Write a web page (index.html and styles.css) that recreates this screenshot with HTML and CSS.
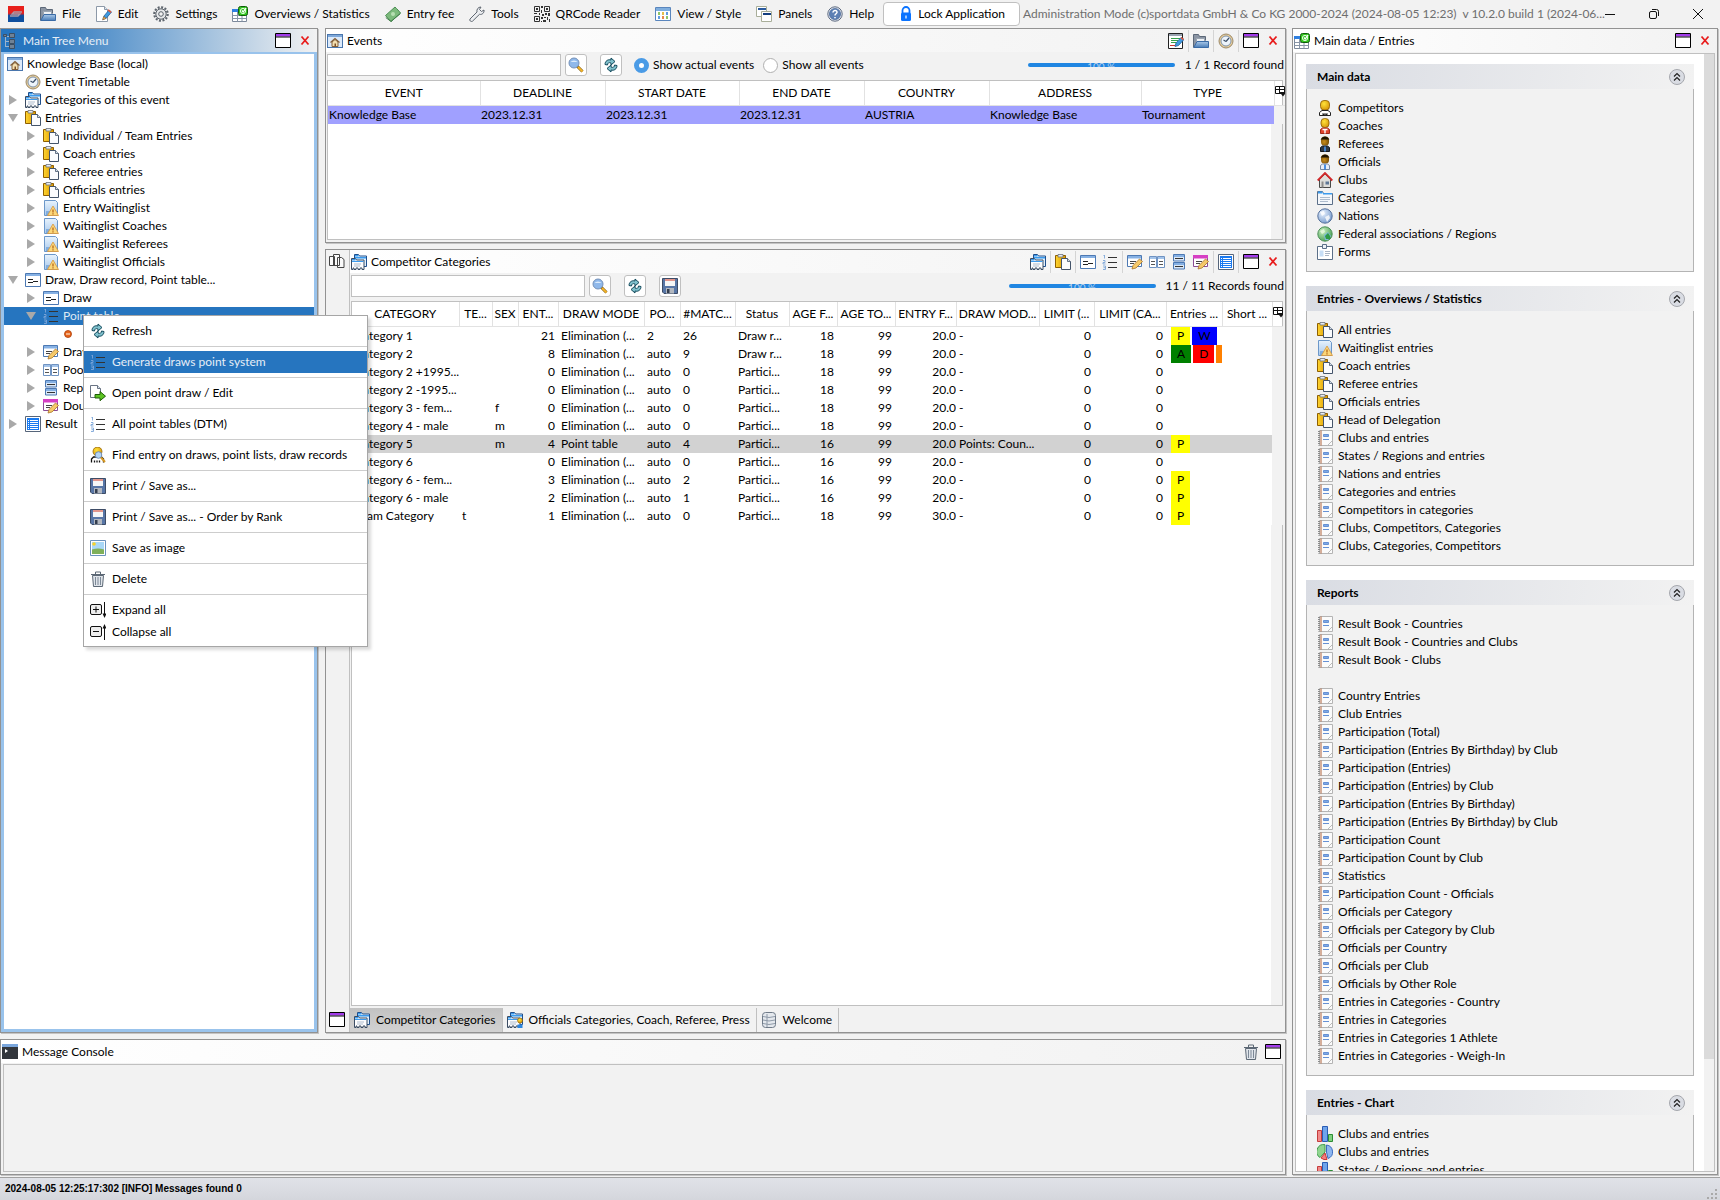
FILE: index.html
```html
<!DOCTYPE html>
<html lang="en">
<head>
  <meta charset="UTF-8" />
  <meta name="viewport" content="width=device-width, initial-scale=1" />
  <title>Sportdata | Administration Mode</title>
  <link rel="stylesheet" href="styles.css">
</head>
<body>
  <!-- Icon sprite -->
  <svg class="sprite" width="0" height="0" aria-hidden="true">
    <defs>
      <linearGradient id="g-blue" x1="0" y1="0" x2="0" y2="1"><stop offset="0" stop-color="#e8f3fd"/><stop offset="1" stop-color="#a9c9ec"/></linearGradient>
      <linearGradient id="g-folder" x1="0" y1="0" x2="0" y2="1"><stop offset="0" stop-color="#a9c8e8"/><stop offset="1" stop-color="#4a7db8"/></linearGradient>
      <linearGradient id="g-gold" x1="0" y1="0" x2="1" y2="0"><stop offset="0" stop-color="#ffd530"/><stop offset="1" stop-color="#d99400"/></linearGradient>
      <linearGradient id="g-logo" x1="0" y1="0" x2="0" y2="1"><stop offset="0.45" stop-color="#e8201c"/><stop offset="0.6" stop-color="#0f4f9e"/></linearGradient>
      <radialGradient id="g-globe" cx="0.35" cy="0.3" r="0.8"><stop offset="0" stop-color="#e8f2ff"/><stop offset="1" stop-color="#6f94c8"/></radialGradient>
      <radialGradient id="g-green" cx="0.35" cy="0.3" r="0.8"><stop offset="0" stop-color="#c9efc0"/><stop offset="1" stop-color="#3f9a4c"/></radialGradient>
      <radialGradient id="g-head" cx="0.4" cy="0.35" r="0.8"><stop offset="0" stop-color="#ffe23a"/><stop offset="1" stop-color="#d08a00"/></radialGradient>
      <radialGradient id="g-dark" cx="0.4" cy="0.6" r="0.8"><stop offset="0" stop-color="#c98d1c"/><stop offset="1" stop-color="#5a3a00"/></radialGradient>
    </defs>
    <symbol id="i-logo" viewBox="0 0 16 16"><rect width="16" height="16" fill="url(#g-logo)"/><path d="M14 6H6L4 8h8l-2 2H2" fill="none" stroke="#a89aa8" stroke-width="1.300"/></symbol>
    <symbol id="i-folder" viewBox="0 0 16 16"><path d="M.5 14.500V1.500h5l1 2h6v4" fill="#8b95a4" stroke="#5c6878"/><path d="M3.500 5.500h8v3h-8z" fill="#eef1f5" stroke="#9aa4b0"/><path d="M4 8.500h11.500v6H.8z" fill="url(#g-folder)" stroke="#3a6ba6"/></symbol>
    <symbol id="i-edit" viewBox="0 0 16 16"><path d="M.5 .5h8l3 3v12H.5z" fill="#fff" stroke="#8d99a8"/><path d="M8.500 .5v3h3" fill="#dfe7f0" stroke="#8d99a8"/><path d="M7 13.500l1-3.500 5-6 2.500 2-5 6z" fill="#3f9be0" stroke="#235d9a" stroke-width=".8"/><path d="M6.500 14l1.200-3.600L10.200 12.400z" fill="#f0b050" stroke="#7d4f26" stroke-width=".5"/><path d="M12.500 3.200L15.500 5.700l-1 1.200-3-2.400z" fill="#e2573a"/></symbol>
    <symbol id="i-gear" viewBox="0 0 16 16"><circle cx="8" cy="8" r="6.700" fill="none" stroke="#5f666e" stroke-width="2.200" stroke-dasharray="2 1.500"/><circle cx="8" cy="8" r="5.200" fill="#e6e8ea" stroke="#5a6169"/><circle cx="8" cy="8" r="2.300" fill="#f2f2f2" stroke="#5a6169"/></symbol>
    <symbol id="i-overview" viewBox="0 0 16 16"><path d="M.5 3.500h14v12H.5z" fill="#fff" stroke="#7c899b"/><path d="M0 3h10v3H0z" fill="#2f7fe0"/><path d="M.5 9.500h14M.5 12.500h14M5.500 6v9.500M10 8v7.500" stroke="#8996a8"/><rect x="6.500" y=".5" width="9" height="9" rx="2" fill="#35c422" stroke="#0e5c08"/><circle cx="11" cy="5" r="2.600" fill="none" stroke="#e9ffe4"/><path d="M10 4.500l1.200 1.500L14 2" fill="none" stroke="#fff" stroke-width="1.300"/></symbol>
    <symbol id="i-money" viewBox="0 0 16 16"><path d="M.5 9.500L10 1l1.500 1.500L13 4l2.500 3L6 15.500z" fill="#7cba7c" stroke="#4d8f55"/><path d="M.8 11.500l5.200 4 9.500-8" fill="none" stroke="#3f7d48"/><circle cx="8" cy="8" r="2" fill="#b6deb2"/></symbol>
    <symbol id="i-wrench" viewBox="0 0 16 16"><path d="M1 13l7-7c-.6-2.500 1-5 4-5l-1.500 2.500 2 2L15 4c.4 3-2 5-4.500 4.300L3.500 15.200C2 16.200 0 14.500 1 13z" fill="#eceef1" stroke="#5e6670"/></symbol>
    <symbol id="i-qr" viewBox="0 0 16 16"><path d="M.5 .5h5v5h-5zM10.500 .5h5v5h-5zM.5 10.500h5v5h-5z" fill="none" stroke="#333"/><path d="M2 2h2v2H2zM12 2h2v2h-2zM2 12h2v2H2zM7 0h2v2H7zM7 4h1v3H7zM0 7h3v1H0zM5 7h1v2H5zM8 8h2v2H8zM11 7h2v2h-2zM14 7h2v3h-2zM7 11h2v2H7zM10 11h2v1h-2zM13 11h1v3h-1zM9 14h3v2H9zM15 13h1v3h-1zM7 15h1v1H7z" fill="#333"/></symbol>
    <symbol id="i-view" viewBox="0 0 16 16"><path d="M.5 1.500h15v13H.5z" fill="#fff" stroke="#5a86bd"/><path d="M1 2h14v3H1z" fill="#7faede"/><path d="M3 6h2v3H3zM11 10h2v3h-2z" fill="#8fc66a"/><path d="M7 6h2v3H7z" fill="#e4c04a"/><path d="M11 6h2v3h-2zM3 10h2v3H3z" fill="#5f9be0"/><path d="M7 10h2v3H7z" fill="#e88a4a"/></symbol>
    <symbol id="i-panels" viewBox="0 0 16 16"><path d="M.5 .5h10v10H.5z" fill="#fff" stroke="#a9ae9a"/><path d="M2 2h8v2H2z" fill="#2a5a9e"/><path d="M5.500 5.500h10v10h-10z" fill="#fff" stroke="#a9ae9a"/><path d="M7 7h8v2H7z" fill="#143f80"/></symbol>
    <symbol id="i-help" viewBox="0 0 16 16"><circle cx="8" cy="8" r="7.200" fill="#e9edf4" stroke="#5d6a80"/><circle cx="8" cy="8" r="5.600" fill="#5d80b4" stroke="#3a5a8c" stroke-width=".6"/><path d="M6 6.500C6 3.800 10.300 4 10 6.500 9.800 7.800 8 7.800 8 9.500M8 11v1.300" fill="none" stroke="#fff" stroke-width="1.500"/></symbol>
    <symbol id="i-lock" viewBox="0 0 16 16"><path d="M4.500 7V4.500a3.500 3.500 0 0 1 7 0V7" fill="none" stroke="#0a73ff" stroke-width="1.800"/><rect x="3" y="6.500" width="10" height="8.500" rx="1.500" fill="#0a73ff"/><path d="M8 9.500v3" stroke="#fff" stroke-width="1.200"/></symbol>
    <symbol id="i-tree" viewBox="0 0 16 16"><path d="M2.500 3v11M3 8.500h4M3 13.500h4M4 3.500h3" stroke="#9db4cc" fill="none"/><path d="M.5 1.500h3v2h-3zM6.500 .5h5v4h-5zM6.500 6.500h5v4h-5zM6.500 11.500h5v4h-5z" fill="#6f8296" stroke="#3c4f64"/></symbol>
    <symbol id="i-home" viewBox="0 0 16 16"><rect x=".5" y="1.500" width="15" height="13" fill="#dceafa" stroke="#4a76ad"/><rect x="1" y="2" width="14" height="2" fill="#7fa9da"/><path d="M5 9v4.500h6V9L8 6.500z" fill="#f3dfb0" stroke="#84603a"/><path d="M3.500 9.500L8 5.500l4.500 4" fill="none" stroke="#84603a" stroke-width="1.200"/><path d="M7.500 10.500h1.500v3H7.500z" fill="#7d4f26"/></symbol>
    <symbol id="i-clock" viewBox="0 0 16 16"><circle cx="8" cy="8" r="7" fill="#e6cc98" stroke="#9c8a6b"/><circle cx="8" cy="8" r="5" fill="#edf4fb" stroke="#7f94ae"/><path d="M8 8.500l3-3.500M8 8.500L5.500 7" stroke="#3d5068" fill="none" stroke-width="1.200"/></symbol>
    <symbol id="i-cats" viewBox="0 0 16 16"><path d="M3.500 5V.5h4l1 1.500h7v10.500h-3" fill="#e3f0fc" stroke="#1f4f8c"/><path d="M4 1h3.500v1.500H4zM4 3h11v1.500H4z" fill="#3b9bee"/><path d="M.5 15.500V4.500h4l1 1.500h7.500v9.500h-2v-1.500H9v1.500H7v-1.500H5v1.500H3v-1.500H2v1.500z" fill="#fdfdfe" stroke="#3b4c63"/><path d="M1 5h3.500v1.500H1zM1 7h11.500v1H1z" fill="#3b9bee"/><path d="M3 10h7M3 12h6" stroke="#aebccd"/></symbol>
    <symbol id="i-offcats" viewBox="0 0 16 16"><use href="#i-cats"/><circle cx="13" cy="8.500" r="2.500" fill="url(#g-head)" stroke="#8a5a00" stroke-width=".6"/><path d="M10.500 16v-3.500h5V16z" fill="#2c86e0"/></symbol>
    <symbol id="i-paste" viewBox="0 0 16 16"><path d="M.5 1.500h10v12H.5z" fill="url(#g-gold)" stroke="#8f5f00"/><path d="M3 .5h5v2.500H3z" fill="#e8ebf0" stroke="#6b727c" stroke-width=".8"/><path d="M6.500 4.500h6l3 3v8h-9z" fill="#fbfcfe" stroke="#44546a"/><path d="M12.500 4.500v3h3" fill="#d5dfeb" stroke="#44546a" stroke-width=".8"/></symbol>
    <symbol id="i-warn" viewBox="0 0 16 16"><path d="M1.500 .5h11l2 2v13h-13z" fill="url(#g-blue)" stroke="#6b97c9"/><path d="M3 12h4M3 14h3" stroke="#4c8ad0"/><path d="M10 6l5.500 9.500h-11z" fill="#fbd77a" stroke="#d8963a" stroke-width=".8"/><path d="M10 9.500v3M10 13.300v1.200" stroke="#b25f12" stroke-width="1.200"/></symbol>
    <symbol id="i-draw" viewBox="0 0 16 16"><path d="M.5 1.500h15v13H.5z" fill="#fff" stroke="#4d79b3"/><path d="M1 2h14v2H1z" fill="#86b1e4"/><path d="M3 7.500h5M3 10.500h5M8 9.500h5" stroke="#222"/></symbol>
    <symbol id="i-list" viewBox="0 0 16 16"><path d="M6 3.500h9M6 8.500h9M6 13.500h9" stroke="#333"/><path d="M2.500 1v3.500M1.500 1.500h1M1 6.500h2v2H1V10h2.500M1 12h2.500v3.500H1M1.500 13.700h2" stroke="#7da6d8" fill="none" stroke-width=".9"/></symbol>
    <symbol id="i-dot" viewBox="0 0 16 16"><circle cx="8" cy="8" r="3.500" fill="#e8651a" stroke="#a83c0a" stroke-width=".8"/><path d="M6 8h4" stroke="#fbe0c8" stroke-width="1.200"/></symbol>
    <symbol id="i-drawrec" viewBox="0 0 16 16"><path d="M.5 1.500h14v11H.5z" fill="#fff" stroke="#4d79b3"/><path d="M1 2h13v2.500H1z" fill="#86b1e4"/><path d="M3 7.500h6M3 9.500h4" stroke="#444"/><path d="M5 15l1-3.500L12.500 5l3 2.500L9 14z" fill="#f5c96a" stroke="#a8752a" stroke-width=".8"/></symbol>
    <symbol id="i-double" viewBox="0 0 16 16"><path d="M.5 1.500h14v11H.5z" fill="#fff" stroke="#8a4d95"/><path d="M0 1h15v3.500H0z" fill="#d63fc4"/><path d="M3 7.500h6M3 9.500h4" stroke="#444"/><path d="M5 15l1-3.500L12.500 5l3 2.500L9 14z" fill="#f5c96a" stroke="#a8752a" stroke-width=".8"/></symbol>
    <symbol id="i-pool" viewBox="0 0 16 16"><path d="M.5 2.500h7v11h-7zM8.500 2.500h7v11h-7z" fill="#fff" stroke="#6f93c2"/><path d="M1 3h6v2H1zM9 3h6v2H9z" fill="#a4c4ea"/><path d="M2 7.500h4M2 10.500h4M10 7.500h4M10 10.500h4" stroke="#555"/></symbol>
    <symbol id="i-rep" viewBox="0 0 16 16"><path d="M2.500 .5h11v6.500h-11zM2.500 8.500h11v6.500h-11z" fill="#dbe8f7" stroke="#4d79b3"/><path d="M3 1h10v2H3zM3 9h10v2H3z" fill="#86b1e4"/><path d="M4 4.500h8M4 12.500h8" stroke="#333"/></symbol>
    <symbol id="i-result" viewBox="0 0 16 16"><path d="M.5 .5h15v15H.5z" fill="#fff" stroke="#56657a"/><path d="M2 2h12v12H2z" fill="#1a7af0"/><path d="M3 4.500h1M3 6.500h1M3 8.500h1M3 10.500h1M3 12.500h1M5 4.500h8M5 6.500h8M5 8.500h8M5 10.500h8M5 12.500h8" stroke="#fff"/></symbol>
    <symbol id="i-search" viewBox="0 0 16 16"><path d="M9 9l5.500 5.500" stroke="#7d5a16" stroke-width="3"/><path d="M10 10l4.500 4.500" stroke="#f5b62a" stroke-width="1.800"/><circle cx="6" cy="6" r="5" fill="#8fb8ea" stroke="#7591b8"/><path d="M2.500 5a4 3 0 0 1 7 0z" fill="#dcebfb"/></symbol>
    <symbol id="i-refresh" viewBox="0 0 16 16"><path d="M2 7.500C2 4 5 2 8 3V1l4 3.500L8 8V6C6 5 4.500 6 4.500 8z" fill="#7fc0cc" stroke="#134a5c"/><path d="M14 8.500c0 3.500-3 5.500-6 4.500v2L4 11.500 8 8v2c2 1 3.500 0 3.500-2z" fill="#7fc0cc" stroke="#134a5c"/></symbol>
    <symbol id="i-floppy" viewBox="0 0 16 16"><path d="M.5 .5h15v15H2l-1.500-1.500z" fill="#5876a6" stroke="#3d4c66"/><path d="M3 1h10v7H3z" fill="#f6f6f6"/><path d="M3 1h10v2H3z" fill="#e2968c"/><path d="M4 10h8v5.500H4z" fill="#b3b8c0"/><path d="M5 11h2.500v4H5z" fill="#333d4e"/></symbol>
    <symbol id="i-open" viewBox="0 0 16 16"><path d="M.5 .5h7l3 3v9H.5z" fill="#fff" stroke="#6a7484"/><path d="M7.500 .5v3h3" fill="#dfe7f0" stroke="#6a7484"/><path d="M5 9.500h5V6.500l5.500 4.700-5.500 4.500V13H5z" fill="#5cc422" stroke="#1f5c08"/></symbol>
    <symbol id="i-find" viewBox="0 0 16 16"><ellipse cx="7.500" cy="4.500" rx="4.500" ry="4.500" fill="url(#g-head)" stroke="#8a5a00" stroke-width=".7"/><path d="M1.500 15.500V12l2-2h8l2 2v3.500M4.500 15.500v-2M7 15.500v-2M9.500 15.500v-2" fill="#fff" stroke="#111" stroke-width="1.300"/><circle cx="8.500" cy="8" r="3.300" fill="#b4d4f4" stroke="#6f8cb4"/><path d="M11 10.500l4 4.500" stroke="#d89a24" stroke-width="2"/></symbol>
    <symbol id="i-image" viewBox="0 0 16 16"><path d="M.5 .5h15v15H.5z" fill="#fff" stroke="#6b93bd"/><path d="M2 2h12v8H2z" fill="#a9d8f7"/><path d="M2 9.500q6-2 12 0V14H2z" fill="#7fb05a"/><circle cx="4" cy="4" r="1.800" fill="#f6d22c"/></symbol>
    <symbol id="i-trash" viewBox="0 0 16 16"><path d="M2.500 4.500h11l-1 11h-9z" fill="#dfe4ea" stroke="#5c6875"/><path d="M1 3.500h14M5.500 3V1h5v2" fill="none" stroke="#5c6875"/><path d="M5.500 6v8M8 6v8M10.500 6v8" stroke="#7c8896"/></symbol>
    <symbol id="i-expand" viewBox="0 0 16 16"><rect x=".5" y="2.500" width="11" height="10" rx="1.500" fill="#eee" stroke="#111"/><path d="M3 7.500h6M6 4.500v6" stroke="#111"/><path d="M14.500 0v13" stroke="#111"/><path d="M12.500 11.500h4L14.500 16z" fill="#111"/></symbol>
    <symbol id="i-collapse" viewBox="0 0 16 16"><rect x=".5" y="2.500" width="11" height="10" rx="1.500" fill="#eee" stroke="#111"/><path d="M3 7.500h6" stroke="#111"/><path d="M14.500 16V3" stroke="#111"/><path d="M12.500 4.500h4L14.500 0z" fill="#111"/></symbol>
    <symbol id="i-formedit" viewBox="0 0 16 16"><path d="M.5 .5h14v15H.5z" fill="#fff" stroke="#222"/><path d="M1 2h13" stroke="#9aa4b0" stroke-width="2"/><path d="M3 5.500h9M3 7.500h7M3 9.500h5" stroke="#35a04a"/><path d="M2 12.500h5" stroke="#c33"/><path d="M7 13.500l1-3.500 5-5.500L16 6.500l-5.500 6z" fill="#3f9be0" stroke="#235d9a" stroke-width=".8"/><path d="M13.500 4L16 6l-1 1.200-2.500-2z" fill="#e2573a"/></symbol>
    <symbol id="i-pages" viewBox="0 0 16 16"><path d="M.5 3.500h5v9h-5zM4.500 1.500h6v11h-6zM8.500 4.500h4l2.500 2v8H8.500z" fill="#fafafa" stroke="#444"/></symbol>
    <symbol id="i-db" viewBox="0 0 16 16"><rect x="1.500" y=".5" width="13" height="15" rx="3" fill="#e4e8ed" stroke="#6f7a88"/><path d="M2 4.500q6 2 12 0M2 8q6 2 12 0M2 11.500q6 2 12 0M6 2v13" fill="none" stroke="#8f9aa8"/></symbol>
    <symbol id="i-console" viewBox="0 0 16 16"><path d="M0 0h16v15H0z" fill="#32363c"/><path d="M0 0h16v3H0z" fill="#7aa6dc"/><path d="M3 5l3 2-3 2z" fill="#fff"/></symbol>
    <symbol id="i-person" viewBox="0 0 16 16"><rect x="3.500" y=".5" width="9" height="9.500" rx="3.500" fill="url(#g-head)" stroke="#8a5a00" stroke-width=".8"/><path d="M2.500 15.500v-3l2.500-2h6l2.500 2v3z" fill="#fff" stroke="#222"/><path d="M5 13.500h6l-1 2-2-1-2 1z" fill="#222"/></symbol>
    <symbol id="i-coach" viewBox="0 0 16 16"><rect x="4" y=".5" width="8" height="9" rx="3.500" fill="url(#g-head)" stroke="#8a5a00" stroke-width=".8"/><path d="M3.500 15.500v-4l2-1.500h5l2 1.500v4z" fill="#e0442c" stroke="#a02818"/><path d="M5.500 11.500h5M8 11v4.500" stroke="#fff" stroke-width="1.400"/></symbol>
    <symbol id="i-referee" viewBox="0 0 16 16"><rect x="4" y=".5" width="8" height="9" rx="3.500" fill="url(#g-dark)"/><path d="M3.500 3.500q4.500-6 9 0z" fill="#1c1200"/><path d="M3.500 15.500v-4l2-1.500h5l2 1.500v4z" fill="#2d3846" stroke="#11161d"/><path d="M8 10.500v5" stroke="#4b93e8" stroke-width="1.600"/></symbol>
    <symbol id="i-official" viewBox="0 0 16 16"><rect x="4" y=".5" width="8" height="9" rx="3.500" fill="url(#g-dark)"/><path d="M3.500 3.500q4.500-6 9 0z" fill="#1c1200"/><path d="M3.500 15.500v-4l2-1.500h5l2 1.500v4z" fill="#e8eef6" stroke="#7688a0"/><path d="M8 10.500v5" stroke="#2476dc" stroke-width="1.600"/></symbol>
    <symbol id="i-club" viewBox="0 0 16 16"><path d="M2.500 7.500v8h11v-8L8 2z" fill="#dededa" stroke="#4a4a48"/><path d="M.7 8.500L8 1l7.300 7.500" fill="none" stroke="#d2282a" stroke-width="1.800"/><path d="M4.500 9.500h2v6h-2z" fill="#8c8c8a"/><path d="M8.500 9.500h3.500v3H8.500z" fill="#5f7896"/></symbol>
    <symbol id="i-category" viewBox="0 0 16 16"><path d="M.5 14.500v-13h5l1 2h9v11z" fill="#f4f7fb" stroke="#5b6f88"/><path d="M1 1.500h4.500v2H1zM6 3h9v1.500H6z" fill="#3b9bee"/><path d="M3 7.500h10M3 9.500h10M3 11.500h8" stroke="#aebccd"/></symbol>
    <symbol id="i-globe" viewBox="0 0 16 16"><circle cx="8" cy="8" r="7.200" fill="url(#g-globe)" stroke="#56719c"/><path d="M3 4l4-1 1 3-3 2zM8 9l4-2 1 3-3 4z" fill="#fff" opacity=".8"/></symbol>
    <symbol id="i-region" viewBox="0 0 16 16"><circle cx="8" cy="8" r="7.200" fill="url(#g-green)" stroke="#4c8f58"/><path d="M3 5l4-2 1 3-3 2z" fill="#e0f6d8"/><path d="M7 9l4-3 3 4-3 4H8z" fill="#7cb8d8"/><path d="M8 10l3-3 2 3v3H9z" fill="#2c9a44"/></symbol>
    <symbol id="i-form" viewBox="0 0 16 16"><path d="M.5 2.500h15v13H.5z" fill="#fff" stroke="#5b6f88"/><path d="M5.500 .5h4v4h-4z" fill="#eef2f7" stroke="#5b6f88"/><path d="M2.500 6.500h4v6h-4z" fill="#c7def6"/><path d="M8 7.500h5M8 9.500h5M8 11.500h4" stroke="#aab6c6"/></symbol>
    <symbol id="i-book" viewBox="0 0 16 16"><path d="M2.500 .5h13v15h-13z" fill="#fbfbfb" stroke="#b4b4b4"/><path d="M4 .5v15" stroke="#b0623a"/><path d="M2 1v14.500" stroke="#8a8a8a" stroke-dasharray="1 1" stroke-width="2"/><path d="M6.500 4.500h5v2h-5z" fill="#7fa9e4" stroke="#6690d4"/><path d="M6 9.500h6" stroke="#6690d4"/><path d="M10.500 15.500l5-5" stroke="#bbb"/></symbol>
    <symbol id="i-bars" viewBox="0 0 16 16"><path d="M.5 4.500h4v11h-4z" fill="#f08a8a" stroke="#c43c3c"/><path d="M5.500 .5h5v15h-5z" fill="#6fa4ec" stroke="#2a5cb4"/><path d="M11.500 8.500h4v7h-4z" fill="#7fd07f" stroke="#2c8c34"/></symbol>
    <symbol id="i-pie" viewBox="0 0 16 16"><path d="M8 8L3 13.500A7 7 0 0 1 8 .7z" fill="#8fd48f" stroke="#3f9a4c"/><path d="M9.500 1a7 7 0 0 1 1.500 13.500L9.500 8z" fill="#8db6f0" stroke="#3a6cc0"/><path d="M8 9l2 6.500q-3 .8-6-1.500z" fill="#f08080" stroke="#c33"/></symbol>
    <symbol id="i-max" viewBox="0 0 16 16"><path d="M.5 .5h15v14H.5z" fill="#fff" stroke="#000"/><path d="M1 1h14v2.500H1z" fill="#a23bea"/><path d="M1 4h14" stroke="#000"/></symbol>
    <symbol id="i-close" viewBox="0 0 16 16"><path d="M4.500 3.500l7 8M11.500 3.500l-7 8" stroke="#e81c1c" stroke-width="1.800"/></symbol>
    <symbol id="i-columns" viewBox="0 0 12 12"><path d="M.5 1.500h9v7h-9zM.5 4.500h9M4.500 1.500v7" fill="#fff" stroke="#111"/><path d="M4.500 7h7L8 11.500z" fill="#111"/></symbol>
    <symbol id="i-up" viewBox="0 0 16 16"><circle cx="8" cy="8" r="7.500" fill="#d9dce3" stroke="#a5a7ad"/><path d="M5 7.500l3-3 3 3M5 11.500l3-3 3 3" fill="none" stroke="#222" stroke-width="1.200"/></symbol>
    <symbol id="i-wmin" viewBox="0 0 12 12"><path d="M1 6.500h10" stroke="#111"/></symbol>
    <symbol id="i-wrestore" viewBox="0 0 12 12"><rect x="1.500" y="3.500" width="7" height="7" rx="1.500" fill="none" stroke="#111"/><path d="M4 1.500h4.500a2 2 0 0 1 2 2V8" fill="none" stroke="#111"/></symbol>
    <symbol id="i-wclose" viewBox="0 0 12 12"><path d="M1 1l10 10M11 1L1 11" stroke="#111"/></symbol>
  </svg>

  <header class="menubar">
    <svg class="ico"><use href="#i-logo"/></svg>
    <nav class="menus">
      <button><svg class="ico"><use href="#i-folder"/></svg>File</button>
      <button><svg class="ico"><use href="#i-edit"/></svg>Edit</button>
      <button><svg class="ico"><use href="#i-gear"/></svg>Settings</button>
      <button><svg class="ico"><use href="#i-overview"/></svg>Overviews / Statistics</button>
      <button><svg class="ico"><use href="#i-money"/></svg>Entry fee</button>
      <button><svg class="ico"><use href="#i-wrench"/></svg>Tools</button>
      <button><svg class="ico"><use href="#i-qr"/></svg>QRCode Reader</button>
      <button><svg class="ico"><use href="#i-view"/></svg>View / Style</button>
      <button><svg class="ico"><use href="#i-panels"/></svg>Panels</button>
      <button><svg class="ico"><use href="#i-help"/></svg>Help</button>
    </nav>
    <button class="lock"><svg class="ico"><use href="#i-lock"/></svg>Lock Application</button>
    <span class="version">Administration Mode (c)sportdata GmbH &amp; Co KG 2000-2024 (2024-08-05 12:23)&nbsp; v 10.2.0 build 1 (2024-06...</span>
    <div class="window-buttons">
      <button aria-label="Minimize"><svg><use href="#i-wmin"/></svg></button>
      <button aria-label="Restore"><svg><use href="#i-wrestore"/></svg></button>
      <button aria-label="Close"><svg><use href="#i-wclose"/></svg></button>
    </div>
  </header>

  <div class="workspace">
    <div class="left-side">
      <div class="upper">
        <section class="panel tree-panel">
          <div class="title active">
            <svg class="ico"><use href="#i-tree"/></svg>
            <h2>Main Tree Menu</h2>
            <button aria-label="Maximize"><svg class="ico"><use href="#i-max"/></svg></button>
            <button aria-label="Close"><svg class="ico"><use href="#i-close"/></svg></button>
          </div>
          <div class="tree">
            <ul>
              <li class="root"><svg class="ico"><use href="#i-home"/></svg>Knowledge Base (local)</li>
              <li class="l1"><i></i><svg class="ico"><use href="#i-clock"/></svg>Event Timetable</li>
              <li class="l1"><i class="shut"></i><svg class="ico"><use href="#i-cats"/></svg>Categories of this event</li>
              <li class="l1"><i class="open"></i><svg class="ico"><use href="#i-paste"/></svg>Entries</li>
              <li class="l2"><i class="shut"></i><svg class="ico"><use href="#i-paste"/></svg>Individual / Team Entries</li>
              <li class="l2"><i class="shut"></i><svg class="ico"><use href="#i-paste"/></svg>Coach entries</li>
              <li class="l2"><i class="shut"></i><svg class="ico"><use href="#i-paste"/></svg>Referee entries</li>
              <li class="l2"><i class="shut"></i><svg class="ico"><use href="#i-paste"/></svg>Officials entries</li>
              <li class="l2"><i class="shut"></i><svg class="ico"><use href="#i-warn"/></svg>Entry Waitinglist</li>
              <li class="l2"><i class="shut"></i><svg class="ico"><use href="#i-warn"/></svg>Waitinglist Coaches</li>
              <li class="l2"><i class="shut"></i><svg class="ico"><use href="#i-warn"/></svg>Waitinglist Referees</li>
              <li class="l2"><i class="shut"></i><svg class="ico"><use href="#i-warn"/></svg>Waitinglist Officials</li>
              <li class="l1"><i class="open"></i><svg class="ico"><use href="#i-draw"/></svg>Draw, Draw record, Point table...</li>
              <li class="l2"><i class="shut"></i><svg class="ico"><use href="#i-draw"/></svg>Draw</li>
              <li class="l2 selected"><i class="open"></i><svg class="ico"><use href="#i-list"/></svg>Point table</li>
              <li class="l3"><svg class="ico"><use href="#i-dot"/></svg></li>
              <li class="l2"><i class="shut"></i><svg class="ico"><use href="#i-drawrec"/></svg>Draw</li>
              <li class="l2"><i class="shut"></i><svg class="ico"><use href="#i-pool"/></svg>Pool</li>
              <li class="l2"><i class="shut"></i><svg class="ico"><use href="#i-rep"/></svg>Rep</li>
              <li class="l2"><i class="shut"></i><svg class="ico"><use href="#i-double"/></svg>Dou</li>
              <li class="l1"><i class="shut"></i><svg class="ico"><use href="#i-result"/></svg>Result</li>
            </ul>
            <div class="popup">
              <button><svg class="ico"><use href="#i-refresh"/></svg>Refresh</button>
              <hr>
              <button class="hot"><svg class="ico"><use href="#i-list"/></svg>Generate draws point system</button>
              <hr>
              <button><svg class="ico"><use href="#i-open"/></svg>Open point draw / Edit</button>
              <hr>
              <button><svg class="ico"><use href="#i-list"/></svg>All point tables (DTM)</button>
              <hr>
              <button><svg class="ico"><use href="#i-find"/></svg>Find entry on draws, point lists, draw records</button>
              <hr>
              <button><svg class="ico"><use href="#i-floppy"/></svg>Print / Save as...</button>
              <hr>
              <button><svg class="ico"><use href="#i-floppy"/></svg>Print / Save as... - Order by Rank</button>
              <hr>
              <button><svg class="ico"><use href="#i-image"/></svg>Save as image</button>
              <hr>
              <button><svg class="ico"><use href="#i-trash"/></svg>Delete</button>
              <hr>
              <button><svg class="ico"><use href="#i-expand"/></svg>Expand all</button>
              <button><svg class="ico"><use href="#i-collapse"/></svg>Collapse all</button>
            </div>
          </div>
        </section>

        <div class="center">
          <section class="panel events">
            <div class="title">
              <svg class="ico"><use href="#i-home"/></svg>
              <h2>Events</h2>
              <button aria-label="Edit event"><svg class="ico"><use href="#i-formedit"/></svg></button>
              <span class="sep"></span>
              <button aria-label="Open event"><svg class="ico"><use href="#i-folder"/></svg></button>
              <span class="sep"></span>
              <button aria-label="Timetable"><svg class="ico"><use href="#i-clock"/></svg></button>
              <span class="sep"></span>
              <button aria-label="Maximize"><svg class="ico"><use href="#i-max"/></svg></button>
              <button aria-label="Close"><svg class="ico"><use href="#i-close"/></svg></button>
            </div>
            <div class="toolbar">
              <input type="text" class="filter" aria-label="Search events">
              <button class="tool" aria-label="Search"><svg class="ico"><use href="#i-search"/></svg></button>
              <button class="tool spaced" aria-label="Refresh"><svg class="ico"><use href="#i-refresh"/></svg></button>
              <div class="radios">
                <input type="radio" name="scope" id="scope-actual" checked><label for="scope-actual">Show actual events</label>
                <input type="radio" name="scope" id="scope-all"><label for="scope-all">Show all events</label>
              </div>
              <div class="progress" role="progressbar" aria-valuenow="100"><span>100 %</span></div>
              <span class="found">1 / 1 Record found</span>
            </div>
            <div class="grid">
              <table>
                <colgroup><col class="w152"><col class="w125"><col class="w134"><col class="w125"><col class="w125"><col class="w152"><col class="w133"><col class="w-corner"></colgroup>
                <thead>
                  <tr><th>EVENT</th><th>DEADLINE</th><th>START DATE</th><th>END DATE</th><th>COUNTRY</th><th>ADDRESS</th><th>TYPE</th><th class="corner"><button aria-label="Columns"><svg><use href="#i-columns"/></svg></button></th></tr>
                </thead>
                <tbody>
                  <tr class="event-row"><td>Knowledge Base</td><td>2023.12.31</td><td>2023.12.31</td><td>2023.12.31</td><td>AUSTRIA</td><td>Knowledge Base</td><td>Tournament</td><td class="gutter"></td></tr>
                </tbody>
              </table>
              <div class="rest"></div>
            </div>
          </section>

          <section class="panel categories">
            <div class="strip">
              <button aria-label="Tabs"><svg class="ico"><use href="#i-pages"/></svg></button>
              <button aria-label="Maximize"><svg class="ico"><use href="#i-max"/></svg></button>
            </div>
            <div class="stack">
              <div class="title">
                <svg class="ico"><use href="#i-cats"/></svg>
                <h2>Competitor Categories</h2>
                <button aria-label="Categories"><svg class="ico"><use href="#i-cats"/></svg></button>
                <span class="sep"></span>
                <button aria-label="Entries"><svg class="ico"><use href="#i-paste"/></svg></button>
                <span class="sep"></span>
                <button aria-label="Draw"><svg class="ico"><use href="#i-draw"/></svg></button>
                <button aria-label="Point table"><svg class="ico"><use href="#i-list"/></svg></button>
                <span class="sep"></span>
                <button aria-label="Draw record"><svg class="ico"><use href="#i-drawrec"/></svg></button>
                <button aria-label="Pool"><svg class="ico"><use href="#i-pool"/></svg></button>
                <button aria-label="Repechage"><svg class="ico"><use href="#i-rep"/></svg></button>
                <button aria-label="Double repechage"><svg class="ico"><use href="#i-double"/></svg></button>
                <span class="sep"></span>
                <button aria-label="Result"><svg class="ico"><use href="#i-result"/></svg></button>
                <span class="sep"></span>
                <button aria-label="Maximize"><svg class="ico"><use href="#i-max"/></svg></button>
                <button aria-label="Close"><svg class="ico"><use href="#i-close"/></svg></button>
              </div>
              <div class="toolbar">
                <input type="text" class="filter" aria-label="Search categories">
                <button class="tool" aria-label="Search"><svg class="ico"><use href="#i-search"/></svg></button>
                <button class="tool spaced" aria-label="Refresh"><svg class="ico"><use href="#i-refresh"/></svg></button>
                <button class="tool spaced" aria-label="Save"><svg class="ico"><use href="#i-floppy"/></svg></button>
                <div class="progress" role="progressbar" aria-valuenow="100"><span>100 %</span></div>
                <span class="found">11 / 11 Records found</span>
              </div>
              <div class="grid cats">
                <table>
                  <colgroup><col class="w107"><col class="w33"><col class="w26"><col class="w40"><col class="w86"><col class="w36"><col class="w55"><col class="w54"><col class="w48"><col class="w58"><col class="w61"><col class="w83"><col class="w55"><col class="w72"><col class="w56"><col class="w50"><col class="w-corner"></colgroup>
                  <thead>
                    <tr><th>CATEGORY</th><th>TE...</th><th>SEX</th><th>ENT...</th><th>DRAW MODE</th><th>PO...</th><th>#MATC...</th><th>Status</th><th>AGE F...</th><th>AGE TO...</th><th>ENTRY F...</th><th>DRAW MOD...</th><th>LIMIT (...</th><th>LIMIT (CA...</th><th>Entries ...</th><th>Short ...</th><th class="corner"><button aria-label="Columns"><svg><use href="#i-columns"/></svg></button></th></tr>
                  </thead>
                  <tbody>
                    <tr><td>Category 1</td><td></td><td></td><td>21</td><td>Elimination (...</td><td>2</td><td>26</td><td>Draw r...</td><td>18</td><td>99</td><td>20.0</td><td>-</td><td>0</td><td>0</td><td><b class="p">P</b><b class="w">W</b></td><td></td><td class="gutter"></td></tr>
                    <tr><td>Category 2</td><td></td><td></td><td>8</td><td>Elimination (...</td><td>auto</td><td>9</td><td>Draw r...</td><td>18</td><td>99</td><td>20.0</td><td>-</td><td>0</td><td>0</td><td><b class="a">A</b><b class="d">D</b><b class="o"></b></td><td></td><td class="gutter"></td></tr>
                    <tr><td>Category 2 +1995...</td><td></td><td></td><td>0</td><td>Elimination (...</td><td>auto</td><td>0</td><td>Partici...</td><td>18</td><td>99</td><td>20.0</td><td>-</td><td>0</td><td>0</td><td></td><td></td><td class="gutter"></td></tr>
                    <tr><td>Category 2 -1995...</td><td></td><td></td><td>0</td><td>Elimination (...</td><td>auto</td><td>0</td><td>Partici...</td><td>18</td><td>99</td><td>20.0</td><td>-</td><td>0</td><td>0</td><td></td><td></td><td class="gutter"></td></tr>
                    <tr><td>Category 3 - fem...</td><td></td><td>f</td><td>0</td><td>Elimination (...</td><td>auto</td><td>0</td><td>Partici...</td><td>18</td><td>99</td><td>20.0</td><td>-</td><td>0</td><td>0</td><td></td><td></td><td class="gutter"></td></tr>
                    <tr><td>Category 4 - male</td><td></td><td>m</td><td>0</td><td>Elimination (...</td><td>auto</td><td>0</td><td>Partici...</td><td>18</td><td>99</td><td>20.0</td><td>-</td><td>0</td><td>0</td><td></td><td></td><td class="gutter"></td></tr>
                    <tr class="current"><td>Category 5</td><td></td><td>m</td><td>4</td><td>Point table</td><td>auto</td><td>4</td><td>Partici...</td><td>16</td><td>99</td><td>20.0</td><td>Points: Coun...</td><td>0</td><td>0</td><td><b class="p">P</b></td><td></td><td class="gutter"></td></tr>
                    <tr><td>Category 6</td><td></td><td></td><td>0</td><td>Elimination (...</td><td>auto</td><td>0</td><td>Partici...</td><td>16</td><td>99</td><td>20.0</td><td>-</td><td>0</td><td>0</td><td></td><td></td><td class="gutter"></td></tr>
                    <tr><td>Category 6 - fem...</td><td></td><td></td><td>3</td><td>Elimination (...</td><td>auto</td><td>2</td><td>Partici...</td><td>16</td><td>99</td><td>20.0</td><td>-</td><td>0</td><td>0</td><td><b class="p">P</b></td><td></td><td class="gutter"></td></tr>
                    <tr><td>Category 6 - male</td><td></td><td></td><td>2</td><td>Elimination (...</td><td>auto</td><td>1</td><td>Partici...</td><td>16</td><td>99</td><td>20.0</td><td>-</td><td>0</td><td>0</td><td><b class="p">P</b></td><td></td><td class="gutter"></td></tr>
                    <tr><td>Team Category</td><td>t</td><td></td><td>1</td><td>Elimination (...</td><td>auto</td><td>0</td><td>Partici...</td><td>18</td><td>99</td><td>30.0</td><td>-</td><td>0</td><td>0</td><td><b class="p">P</b></td><td></td><td class="gutter"></td></tr>
                  </tbody>
                </table>
                <div class="rest"></div>
              </div>
              <div class="tabs">
                <button class="on"><svg class="ico"><use href="#i-cats"/></svg>Competitor Categories</button>
                <button><svg class="ico"><use href="#i-offcats"/></svg>Officials Categories, Coach, Referee, Press</button>
                <button><svg class="ico"><use href="#i-db"/></svg>Welcome</button>
              </div>
            </div>
          </section>
        </div>
      </div>

      <section class="panel console">
        <div class="title">
          <svg class="ico"><use href="#i-console"/></svg>
          <h2>Message Console</h2>
          <button aria-label="Clear"><svg class="ico"><use href="#i-trash"/></svg></button>
          <button aria-label="Maximize"><svg class="ico"><use href="#i-max"/></svg></button>
        </div>
        <div class="console-box"></div>
      </section>
    </div>

    <aside class="panel main-data">
      <div class="title">
        <svg class="ico"><use href="#i-overview"/></svg>
        <h2>Main data / Entries</h2>
        <button aria-label="Maximize"><svg class="ico"><use href="#i-max"/></svg></button>
        <button aria-label="Close"><svg class="ico"><use href="#i-close"/></svg></button>
      </div>
      <div class="scroller">
        <div class="tasks">
          <div class="task">
            <h3>Main data<button aria-label="Collapse"><svg class="ico"><use href="#i-up"/></svg></button></h3>
            <ul>
              <li><a href="#"><svg class="ico"><use href="#i-person"/></svg>Competitors</a></li>
              <li><a href="#"><svg class="ico"><use href="#i-coach"/></svg>Coaches</a></li>
              <li><a href="#"><svg class="ico"><use href="#i-referee"/></svg>Referees</a></li>
              <li><a href="#"><svg class="ico"><use href="#i-official"/></svg>Officials</a></li>
              <li><a href="#"><svg class="ico"><use href="#i-club"/></svg>Clubs</a></li>
              <li><a href="#"><svg class="ico"><use href="#i-category"/></svg>Categories</a></li>
              <li><a href="#"><svg class="ico"><use href="#i-globe"/></svg>Nations</a></li>
              <li><a href="#"><svg class="ico"><use href="#i-region"/></svg>Federal associations / Regions</a></li>
              <li><a href="#"><svg class="ico"><use href="#i-form"/></svg>Forms</a></li>
            </ul>
          </div>
          <div class="task">
            <h3>Entries - Overviews / Statistics<button aria-label="Collapse"><svg class="ico"><use href="#i-up"/></svg></button></h3>
            <ul>
              <li><a href="#"><svg class="ico"><use href="#i-paste"/></svg>All entries</a></li>
              <li><a href="#"><svg class="ico"><use href="#i-warn"/></svg>Waitinglist entries</a></li>
              <li><a href="#"><svg class="ico"><use href="#i-paste"/></svg>Coach entries</a></li>
              <li><a href="#"><svg class="ico"><use href="#i-paste"/></svg>Referee entries</a></li>
              <li><a href="#"><svg class="ico"><use href="#i-paste"/></svg>Officials entries</a></li>
              <li><a href="#"><svg class="ico"><use href="#i-paste"/></svg>Head of Delegation</a></li>
              <li><a href="#"><svg class="ico"><use href="#i-book"/></svg>Clubs and entries</a></li>
              <li><a href="#"><svg class="ico"><use href="#i-book"/></svg>States / Regions and entries</a></li>
              <li><a href="#"><svg class="ico"><use href="#i-book"/></svg>Nations and entries</a></li>
              <li><a href="#"><svg class="ico"><use href="#i-book"/></svg>Categories and entries</a></li>
              <li><a href="#"><svg class="ico"><use href="#i-book"/></svg>Competitors in categories</a></li>
              <li><a href="#"><svg class="ico"><use href="#i-book"/></svg>Clubs, Competitors, Categories</a></li>
              <li><a href="#"><svg class="ico"><use href="#i-book"/></svg>Clubs, Categories, Competitors</a></li>
            </ul>
          </div>
          <div class="task">
            <h3>Reports<button aria-label="Collapse"><svg class="ico"><use href="#i-up"/></svg></button></h3>
            <ul>
              <li><a href="#"><svg class="ico"><use href="#i-book"/></svg>Result Book - Countries</a></li>
              <li><a href="#"><svg class="ico"><use href="#i-book"/></svg>Result Book - Countries and Clubs</a></li>
              <li><a href="#"><svg class="ico"><use href="#i-book"/></svg>Result Book - Clubs</a></li>
              <li></li>
              <li><a href="#"><svg class="ico"><use href="#i-book"/></svg>Country Entries</a></li>
              <li><a href="#"><svg class="ico"><use href="#i-book"/></svg>Club Entries</a></li>
              <li><a href="#"><svg class="ico"><use href="#i-book"/></svg>Participation (Total)</a></li>
              <li><a href="#"><svg class="ico"><use href="#i-book"/></svg>Participation (Entries By Birthday) by Club</a></li>
              <li><a href="#"><svg class="ico"><use href="#i-book"/></svg>Participation (Entries)</a></li>
              <li><a href="#"><svg class="ico"><use href="#i-book"/></svg>Participation (Entries) by Club</a></li>
              <li><a href="#"><svg class="ico"><use href="#i-book"/></svg>Participation (Entries By Birthday)</a></li>
              <li><a href="#"><svg class="ico"><use href="#i-book"/></svg>Participation (Entries By Birthday) by Club</a></li>
              <li><a href="#"><svg class="ico"><use href="#i-book"/></svg>Participation Count</a></li>
              <li><a href="#"><svg class="ico"><use href="#i-book"/></svg>Participation Count by Club</a></li>
              <li><a href="#"><svg class="ico"><use href="#i-book"/></svg>Statistics</a></li>
              <li><a href="#"><svg class="ico"><use href="#i-book"/></svg>Participation Count - Officials</a></li>
              <li><a href="#"><svg class="ico"><use href="#i-book"/></svg>Officials per Category</a></li>
              <li><a href="#"><svg class="ico"><use href="#i-book"/></svg>Officials per Category by Club</a></li>
              <li><a href="#"><svg class="ico"><use href="#i-book"/></svg>Officials per Country</a></li>
              <li><a href="#"><svg class="ico"><use href="#i-book"/></svg>Officials per Club</a></li>
              <li><a href="#"><svg class="ico"><use href="#i-book"/></svg>Officials by Other Role</a></li>
              <li><a href="#"><svg class="ico"><use href="#i-book"/></svg>Entries in Categories - Country</a></li>
              <li><a href="#"><svg class="ico"><use href="#i-book"/></svg>Entries in Categories</a></li>
              <li><a href="#"><svg class="ico"><use href="#i-book"/></svg>Entries in Categories 1 Athlete</a></li>
              <li><a href="#"><svg class="ico"><use href="#i-book"/></svg>Entries in Categories - Weigh-In</a></li>
            </ul>
          </div>
          <div class="task">
            <h3>Entries - Chart<button aria-label="Collapse"><svg class="ico"><use href="#i-up"/></svg></button></h3>
            <ul>
              <li><a href="#"><svg class="ico"><use href="#i-bars"/></svg>Clubs and entries</a></li>
              <li><a href="#"><svg class="ico"><use href="#i-pie"/></svg>Clubs and entries</a></li>
              <li><a href="#"><svg class="ico"><use href="#i-bars"/></svg>States / Regions and entries</a></li>
            </ul>
          </div>
        </div>
        <div class="track"><div class="thumb"></div></div>
      </div>
    </aside>
  </div>

  <footer class="status">
    <span>2024-08-05 12:25:17:302 [INFO] Messages found 0</span>
    <svg class="grip" width="12" height="12" viewBox="0 0 12 12"><path d="M9 1h2v2H9zM5 5h2v2H5zM9 5h2v2H9zM1 9h2v2H1zM5 9h2v2H5zM9 9h2v2H9z" fill="#a9a9a9"/></svg>
  </footer>
</body>
</html>
```

FILE: styles.css
```css
:root {
  --bg: #f2f2f2;
  --accent: #2675bf;
  --frame: #929292;
  --shadow: #c4c4c4;
  --line: #c0c0c0;
  --cell: #e2e2e2;
  --focus: #99c3ec;
}

* {
  margin: 0;
  padding: 0;
  box-sizing: border-box;
}

body {
  font-family: Lato, "Open Sans", sans-serif;
  font-size: 12px;
  line-height: 18px;
  background: var(--bg);
  color: #000;
  height: 100vh;
  display: flex;
  flex-direction: column;
  overflow: hidden;
}

button {
  font: inherit;
  color: inherit;
  background: none;
  border: none;
  white-space: nowrap;
}

ul {
  list-style: none;
}

.sprite {
  position: absolute;
}

.ico {
  width: 16px;
  height: 16px;
  flex: none;
  display: block;
}

/* Menu bar */
.menubar {
  flex: none;
  height: 28px;
  display: flex;
  align-items: center;
  padding-left: 8px;
}

.menus {
  display: flex;
  gap: 15px;
  margin: 0 9px 0 16px;
}

.menus button,
.lock {
  display: flex;
  align-items: center;
  gap: 6px;
}

.lock {
  height: 24px;
  padding: 0 14px;
  gap: 4px;
  background: #fff;
  border: 1px solid var(--line);
  border-radius: 4px;
}

.version {
  flex: 1;
  min-width: 0;
  margin-left: 3px;
  color: #6e6e6e;
  white-space: nowrap;
}

.window-buttons {
  display: flex;
}

.window-buttons button {
  width: 44px;
  height: 28px;
  display: flex;
  align-items: center;
  justify-content: center;
}

.window-buttons svg {
  width: 12px;
  height: 12px;
}

/* Workspace */
.workspace {
  flex: 1;
  min-height: 0;
  display: flex;
  gap: 6px;
  padding: 0 2px 2px 0;
}

.left-side,
.center {
  flex: 1;
  min-width: 0;
  display: flex;
  flex-direction: column;
  gap: 6px;
}

.upper {
  flex: 1;
  min-height: 0;
  display: flex;
  gap: 7px;
}

.panel {
  display: flex;
  flex-direction: column;
  background: var(--bg);
  border: 1px solid var(--frame);
  box-shadow: 1px 1px 0 var(--shadow);
}

.title {
  flex: none;
  height: 23px;
  display: flex;
  align-items: center;
  padding: 0 1px;
  background: linear-gradient(90deg, #fff, var(--bg));
}

.title h2 {
  flex: 1;
  margin-left: 4px;
  font-size: 12px;
  font-weight: normal;
}

.title button {
  width: 22px;
  height: 22px;
  display: flex;
  align-items: center;
  justify-content: center;
}

.title .sep {
  width: 1px;
  height: 22px;
  margin: 0 1px;
  background: #d4d4d4;
}

.title.active {
  padding-left: 2px;
  background: linear-gradient(90deg, var(--accent) 10%, var(--bg));
  color: #e6eef6;
}

/* Tree */
.tree-panel {
  width: 318px;
  flex: none;
}

.tree {
  flex: 1;
  position: relative;
  background: #fff;
  border: 3px solid var(--focus);
  border-top-width: 2px;
}

.tree li {
  height: 18px;
  display: flex;
  align-items: center;
  white-space: nowrap;
}

.tree li .ico {
  margin-right: 4px;
}

.tree ul {
  padding-top: 1px;
}

.root { padding-left: 3px; }
.l1 { padding-left: 3px; }
.l2 { padding-left: 21px; }
.l3 { padding-left: 56px; }

.tree i {
  width: 18px;
  flex: none;
}

.tree i::before {
  content: "";
  display: block;
  width: 0;
  height: 0;
  margin-left: 2px;
}

.tree i.shut::before {
  border: 5px solid transparent;
  border-left: 8px solid #a9a9a9;
  border-right: none;
}

.tree i.open::before {
  margin-left: 1px;
  border: 5px solid transparent;
  border-top: 8px solid #a9a9a9;
  border-bottom: none;
}

.tree .selected {
  background: var(--accent);
  color: #dfe9f3;
}

/* Context menu */
.popup {
  position: absolute;
  left: 79px;
  top: 261px;
  z-index: 5;
  width: 285px;
  padding: 4px 0 3px;
  background: #fff;
  border: 1px solid #a6a6a6;
  box-shadow: 3px 3px 3px rgba(0, 0, 0, 0.15);
}

.popup button {
  width: 100%;
  height: 22px;
  display: flex;
  align-items: center;
  gap: 6px;
  padding-left: 6px;
}

.popup hr {
  border: none;
  height: 1px;
  margin: 4px 0;
  background: #cdcdcd;
}

.popup .hot {
  background: var(--accent);
  color: #e6eef6;
}

/* Toolbars */
.toolbar {
  flex: none;
  height: 28px;
  display: flex;
  align-items: center;
  padding: 0 1px 2px 1px;
}

.filter {
  width: 234px;
  height: 22px;
  margin-right: 4px;
  padding: 0 4px;
  font: inherit;
  border: 1px solid var(--line);
}

.tool {
  width: 22px;
  height: 22px;
  display: flex;
  align-items: center;
  justify-content: center;
  background: #fff;
  border: 1px solid var(--line);
  border-radius: 3px;
}

.tool.spaced {
  margin-left: 13px;
}

.radios {
  display: flex;
  align-items: center;
  gap: 4px;
  margin-left: 12px;
}

.radios label + input {
  margin-left: 5px;
}

.radios input {
  appearance: none;
  width: 15px;
  height: 15px;
  border: 1px solid #b0b0b0;
  border-radius: 50%;
  background: #fff;
}

.radios input:checked {
  border: 5px solid #4a9be6;
}

.progress {
  width: 147px;
  height: 4px;
  margin-left: auto;
  overflow: hidden;
  border-radius: 2px;
  background: #2086e2;
  color: #bcd3ec;
  font-size: 10px;
  line-height: 6px;
  text-align: center;
}

.progress span {
  display: block;
}

.found {
  margin-left: 10px;
}

/* Data grids */
.grid {
  flex: 1;
  display: flex;
  flex-direction: column;
  margin: 0 2px 2px 1px;
  background: #fff;
  border: 1px solid var(--line);
}

table {
  width: 100%;
  table-layout: fixed;
  border-collapse: collapse;
}

th,
td {
  overflow: hidden;
  white-space: nowrap;
}

th {
  height: 24px;
  font-weight: normal;
  border-right: 1px solid var(--cell);
  border-bottom: 1px solid var(--cell);
}

td {
  height: 18px;
  padding: 0 3px;
}

.events td {
  padding: 0 1px;
}

.corner {
  border-right: none;
}

.corner svg {
  width: 12px;
  height: 12px;
  display: block;
}

.event-row td {
  background: #a0a0ff;
}

.current td {
  background: #d2d2d2;
}

tr td.gutter {
  background: var(--bg);
}

.rest {
  flex: 1;
  width: 11px;
  margin-left: auto;
  background: var(--bg);
}

.cats td:nth-child(4),
.cats td:nth-child(9),
.cats td:nth-child(10),
.cats td:nth-child(11),
.cats td:nth-child(13),
.cats td:nth-child(14) {
  text-align: right;
}

.cats td:nth-child(11) {
  padding-right: 0;
}

.cats td:nth-child(15) {
  padding: 0 0 0 5px;
}

.cats b {
  display: inline-block;
  height: 18px;
  min-width: 19px;
  margin-right: 2px;
  padding: 0 6px;
  vertical-align: top;
  font-weight: normal;
  text-align: center;
}

.p { background: #ff0; }
.w { background: #00f; }
.a { background: #008000; }
.d { background: #f00; }
.o { background: #ff8000; }

.w107 { width: 107px; }
.w152 { width: 152px; }
.w134 { width: 134px; }
.w133 { width: 133px; }
.w125 { width: 125px; }
.w86 { width: 86px; }
.w83 { width: 83px; }
.w72 { width: 72px; }
.w61 { width: 61px; }
.w58 { width: 58px; }
.w56 { width: 56px; }
.w55 { width: 55px; }
.w54 { width: 54px; }
.w50 { width: 50px; }
.w48 { width: 48px; }
.w40 { width: 40px; }
.w36 { width: 36px; }
.w33 { width: 33px; }
.w26 { width: 26px; }
.w-corner { width: 11px; }

.events {
  flex: none;
  height: 215px;
}

.categories {
  flex: 1;
  min-height: 0;
  flex-direction: row;
}

.strip {
  width: 24px;
  flex: none;
  display: flex;
  flex-direction: column;
  justify-content: space-between;
  padding: 3px 3px 4px 3px;
  border-right: 1px solid var(--line);
}

.stack {
  flex: 1;
  min-width: 0;
  display: flex;
  flex-direction: column;
}

.tabs {
  flex: none;
  height: 24px;
  display: flex;
}

.tabs button {
  display: flex;
  align-items: center;
  gap: 6px;
  padding: 0 6px 0 4px;
  border-right: 1px solid var(--line);
}

.tabs .on {
  background: linear-gradient(#c2c2c2, #d2d2d2);
}

/* Console */
.console {
  flex: none;
  height: 136px;
}

.console-box {
  flex: 1;
  margin: 1px 2px 2px 2px;
  border: 1px solid var(--line);
}

/* Task panes */
.main-data {
  width: 426px;
  flex: none;
}

.scroller {
  flex: 1;
  min-height: 0;
  display: flex;
  margin: 1px 2px 2px 2px;
  background: #fff;
  border: 1px solid var(--line);
}

.tasks {
  flex: 1;
  overflow: hidden;
  padding: 10px;
}

.task {
  margin-bottom: 14px;
}

.task h3 {
  height: 25px;
  display: flex;
  align-items: center;
  justify-content: space-between;
  padding: 0 9px 0 11px;
  font-size: 12px;
  background: linear-gradient(100deg, #d9dce3, var(--bg));
}

.task ul {
  padding: 10px;
  background: var(--bg);
  border: 1px solid #b4b4b4;
  border-top: none;
}

.task li {
  height: 18px;
}

.task a {
  display: flex;
  align-items: center;
  gap: 5px;
  color: #000;
  text-decoration: none;
}

.track {
  width: 10px;
  background: var(--bg);
}

.thumb {
  height: 90%;
  background: #dbdbdb;
}

/* Status bar */
.status {
  flex: none;
  height: 23px;
  display: flex;
  align-items: center;
  justify-content: space-between;
  padding: 0 2px 0 5px;
  font-family: "Liberation Sans", Arial, sans-serif;
  font-size: 10px;
  font-weight: bold;
  background: linear-gradient(#e0e2e8, #d4d6dc);
  border-top: 1px solid #a0a0a0;
}

.grip {
  align-self: flex-end;
}
```
